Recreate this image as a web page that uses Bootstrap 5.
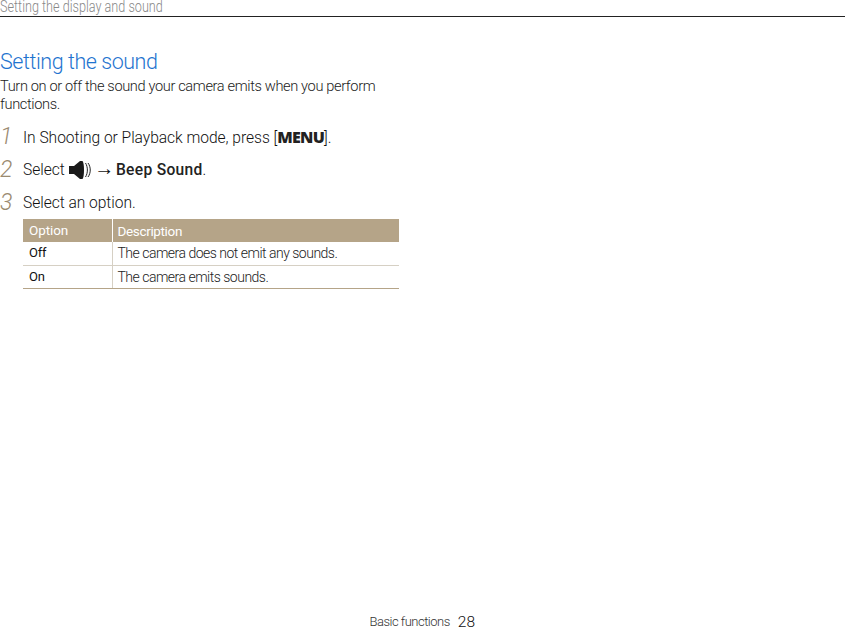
<!DOCTYPE html>
<html lang="en"><head><meta charset="utf-8"><title>Setting the sound</title>
<link rel="stylesheet" href="https://cdn.jsdelivr.net/npm/bootstrap@5.3.0/dist/css/bootstrap.min.css">
<style>
html,body{height:627px;overflow:hidden;background:#fff}
body{font-family:Roboto,"Liberation Sans",Arial,sans-serif;font-weight:300;color:#333;display:flex;flex-direction:column}
.pg-top{height:17px;border-bottom:1px solid #222;font-size:16px;line-height:14px;color:#888}
.pg-top span{display:inline-block;transform:scaleX(.79);transform-origin:0 0;white-space:nowrap}
.pg-main{width:400px;flex:1 1 auto}
.pg-title{font-size:21.5px;letter-spacing:-.45px;line-height:26px;color:#1f74cf;font-weight:300;margin:32px 0 0}
.pg-intro{font-size:14.6px;letter-spacing:-.36px;line-height:18px;margin:2px 0 0;color:#222}
.pg-step{height:32.8px;font-size:15.6px;letter-spacing:-.04px;line-height:20px;color:#111}
.pg-steps{margin-top:14px}
.pg-num{width:23px;font-size:23px;font-style:italic;color:#9a8a70;line-height:20px}
.pg-menu{font-family:"Open Sans",sans-serif;font-weight:800;font-size:16px;letter-spacing:-.7px;color:#222}
.pg-b{font-weight:500;color:#222;letter-spacing:.3px}
.pg-icon{margin-left:1px}
.pg-arrow{font-family:"Liberation Sans",sans-serif;font-size:20px;line-height:0;margin:0 -2px 0 -3px}
.pg-wrap{margin:-6px 0 0 23px;width:376px}
.pg-table{font-size:14px;letter-spacing:-.5px;margin:0;border-collapse:collapse;table-layout:fixed;width:376px;font-weight:300}
.pg-table th{background:#b5a488;color:#fff;font-weight:400;height:23px;padding:0 5px;border:0;vertical-align:middle;font-size:13.5px;line-height:14px;letter-spacing:-.35px}
.pg-table th:first-child{letter-spacing:-.1px;padding-bottom:2px;padding-left:6px}
.pg-table th+th{border-left:1px solid #fff}
.pg-table td{height:23px;padding:0 5px;border:0;border-bottom:1px solid #d6d0c4;vertical-align:middle;color:#222;line-height:14px}
.pg-table tbody tr:first-child td{padding-bottom:2px}
.pg-table tr:last-child td{border-bottom-color:#b5a488}
.pg-table td:first-child{color:#111;font-size:13px;font-weight:400;letter-spacing:-.2px;padding-left:6px}
.pg-table td+td{border-left:1px solid #d6d0c4}
.pg-c1{width:89px}
.pg-foot{height:12px;width:475px;font-size:13px;letter-spacing:-.5px;color:#333;line-height:14px}
.pg-foot b{font-weight:300;font-size:15.5px;letter-spacing:0;color:#111;margin-left:8px}
</style></head>
<body>
<div class="pg-top"><span>Setting the display and sound</span></div>
<main class="pg-main">
<h1 class="pg-title">Setting the sound</h1>
<p class="pg-intro">Turn on or off the sound your camera emits when you perform functions.</p>
<div class="pg-steps">
<div class="pg-step d-flex"><span class="pg-num">1</span><span>In Shooting or Playback mode, press [<span class="pg-menu">MENU</span>].</span></div>
<div class="pg-step d-flex"><span class="pg-num">2</span><span>Select <svg width="24" height="20" viewBox="0 0 24 20" class="align-top pg-icon"><path fill="#1a1a1a" d="M0 6h5l6-5h2.500q1.500 2 1.500 9t-1.500 9H11l-6-5H0z"/><path fill="none" stroke="#222" d="M16.500 3c2.500 4 2.500 10 0 14M19 3c3 4 3 10 0 14"/></svg> <span class="pg-arrow">→</span> <span class="pg-b">Beep Sound</span>.</span></div>
<div class="pg-step d-flex"><span class="pg-num">3</span><span>Select an option.</span></div>
</div>
<div class="pg-wrap">
<table class="table pg-table"><thead><tr><th class="pg-c1">Option</th><th>Description</th></tr></thead>
<tbody><tr><td>Off</td><td>The camera does not emit any sounds.</td></tr><tr><td>On</td><td>The camera emits sounds.</td></tr></tbody></table>
</div>
</main>
<footer class="pg-foot d-flex justify-content-end align-items-start">Basic functions<b>28</b></footer>
<script src="https://cdn.jsdelivr.net/npm/bootstrap@5.3.0/dist/js/bootstrap.bundle.min.js"></script>
</body></html>
